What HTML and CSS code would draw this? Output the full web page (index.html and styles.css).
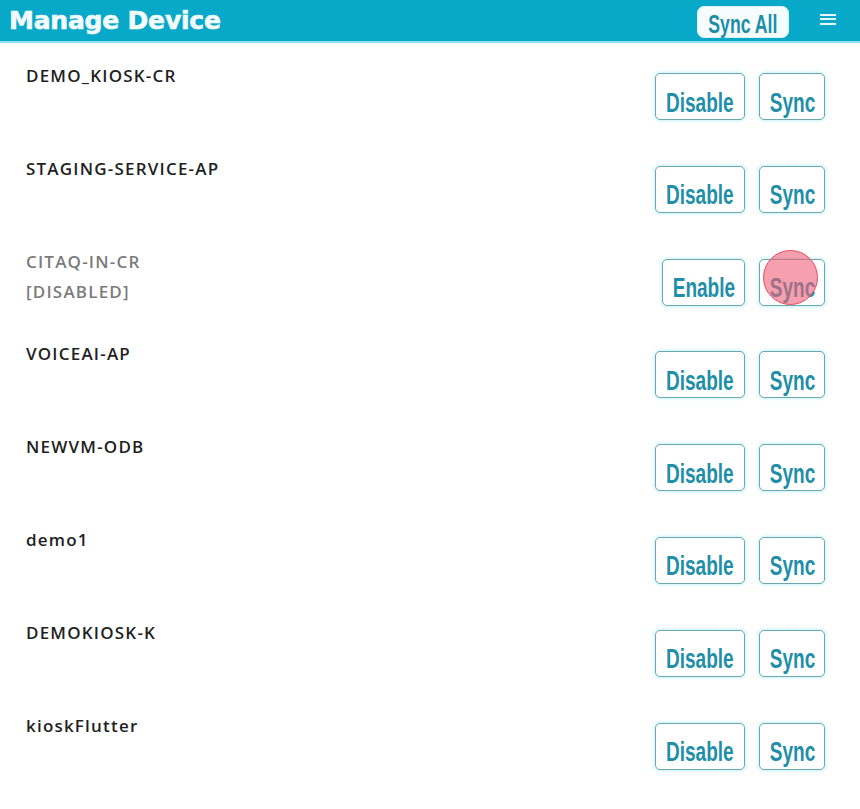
FILE: index.html
```html
<!DOCTYPE html>
<html>
<head>
<meta charset="utf-8">
<link rel="stylesheet" href="styles.css">
</head>
<body>
<header class="topbar">
  <h1 class="title">Manage Device</h1>
  <div class="top-actions">
    <button class="sync-all"><span class="lbl">Sync All</span></button>
    <span class="menu"><i></i><i></i><i></i></span>
  </div>
</header>
<main class="list">
  <div class="row">
    <div class="name">DEMO_KIOSK-CR</div>
    <div class="actions"><button class="btn wide"><span class="lbl">Disable</span></button><button class="btn"><span class="lbl">Sync</span></button></div>
  </div>
  <div class="row">
    <div class="name">STAGING-SERVICE-AP</div>
    <div class="actions"><button class="btn wide"><span class="lbl">Disable</span></button><button class="btn"><span class="lbl">Sync</span></button></div>
  </div>
  <div class="row">
    <div class="name disabled">CITAQ-IN-CR<br>[DISABLED]</div>
    <div class="actions"><button class="btn enable"><span class="lbl">Enable</span></button><button class="btn"><span class="lbl">Sync</span><span class="tap"></span></button></div>
  </div>
  <div class="row">
    <div class="name">VOICEAI-AP</div>
    <div class="actions"><button class="btn wide"><span class="lbl">Disable</span></button><button class="btn"><span class="lbl">Sync</span></button></div>
  </div>
  <div class="row">
    <div class="name">NEWVM-ODB</div>
    <div class="actions"><button class="btn wide"><span class="lbl">Disable</span></button><button class="btn"><span class="lbl">Sync</span></button></div>
  </div>
  <div class="row">
    <div class="name">demo1</div>
    <div class="actions"><button class="btn wide"><span class="lbl">Disable</span></button><button class="btn"><span class="lbl">Sync</span></button></div>
  </div>
  <div class="row">
    <div class="name">DEMOKIOSK-K</div>
    <div class="actions"><button class="btn wide"><span class="lbl">Disable</span></button><button class="btn"><span class="lbl">Sync</span></button></div>
  </div>
  <div class="row">
    <div class="name">kioskFlutter</div>
    <div class="actions"><button class="btn wide"><span class="lbl">Disable</span></button><button class="btn"><span class="lbl">Sync</span></button></div>
  </div>
</main>
</body>
</html>
```
FILE: styles.css
```css
html, body {
  margin: 0;
  padding: 0;
  background: #ffffff;
}
body {
  width: 860px;
  height: 809px;
  overflow: hidden;
  font-family: "Open Sans", "Liberation Sans", sans-serif;
}
.topbar {
  height: 41px;
  background: #08a8c8;
  border-bottom: 2px solid #8fe0ef;
  display: flex;
  align-items: center;
  justify-content: space-between;
  padding: 0 24px 0 9px;
}
.title {
  margin: 0;
  color: #f4fbfd;
  font-family: "DejaVu Sans", "Liberation Sans", sans-serif;
  font-weight: 700;
  font-size: 25px;
  letter-spacing: -0.2px;
  line-height: 1;
  margin-top: -1px;
  -webkit-text-stroke: 0.6px #f4fbfd;
}
.top-actions {
  display: flex;
  align-items: center;
  gap: 31px;
}
.lbl {
  display: inline-block;
  white-space: nowrap;
  transform: scaleX(0.68);
  transform-origin: center;
}
.sync-all {
  height: 32px;
  width: 92px;
  margin-top: 2px;
  background: #f6fdfe;
  border: 1px solid #d8f2f7;
  border-radius: 7px;
  color: #1e8ea8;
  font-family: "Liberation Sans", sans-serif;
  font-weight: 700;
  font-size: 26px;
  padding: 5px 0 0;
  line-height: 1;
  display: flex;
  justify-content: center;
  align-items: center;
}
.menu {
  display: flex;
  flex-direction: column;
  gap: 2.5px;
  width: 16px;
  margin-top: -3px;
}
.menu i {
  display: block;
  height: 2px;
  background: #e6f8fc;
}
.list {
  display: flex;
  flex-direction: column;
  padding-top: 30px;
}
.row {
  height: 92.8px;
  display: flex;
  justify-content: space-between;
  align-items: flex-start;
  padding: 0 35px 0 26px;
}
.name {
  font-family: "Open Sans", "Lato", sans-serif;
  font-weight: 600;
  font-size: 17px;
  letter-spacing: 1.2px;
  color: #1f1f1f;
  line-height: 30px;
  margin-top: -12px;
}
.name.disabled {
  color: #7b7b7b;
}
.actions {
  display: flex;
  gap: 14px;
}
.btn {
  position: relative;
  height: 47px;
  width: 66px;
  background: #ffffff;
  border: 1.5px solid #6ea7b0;
  border-radius: 5px;
  box-shadow: 0 0 3px 1px rgba(150, 235, 245, 0.55);
  color: #1f8fa9;
  font-family: "Liberation Sans", sans-serif;
  font-weight: 700;
  font-size: 28px;
  line-height: 1;
  padding: 12px 0 0;
  display: flex;
  justify-content: center;
  align-items: center;
}
.btn.wide {
  width: 90px;
}
.btn.enable {
  width: 83px;
}
.tap {
  position: absolute;
  left: 3px;
  top: -10px;
  width: 55px;
  height: 55px;
  border-radius: 50%;
  background: rgba(240, 95, 120, 0.6);
  border: 1.5px solid #e84a5f;
  box-sizing: border-box;
}
```
